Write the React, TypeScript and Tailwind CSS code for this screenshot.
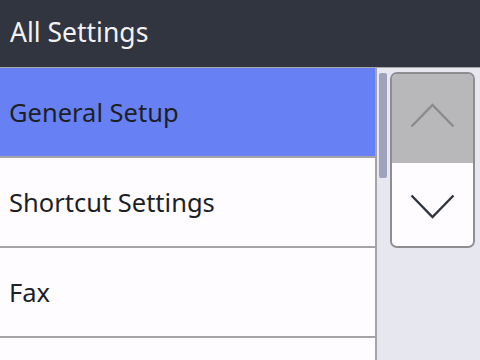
import React from "react";

const ITEMS = ["General Setup", "Shortcut Settings", "Fax", ""];

function Chevron({ up }: { up?: boolean }) {
  return (
    <svg width="45" height="26" viewBox="0 0 45 26" fill="none">
      <path
        d={up ? "M1.5 24.5 L22.5 3 L43.5 24.5" : "M1.5 1.5 L22.5 23 L43.5 1.5"}
        stroke={up ? "#8b8a8d" : "#30343c"}
        strokeWidth="2.4"
      />
    </svg>
  );
}

export default function App() {
  return (
    <div
      className="w-[480px] h-[360px] overflow-hidden flex flex-col bg-[#e6e7ef]"
      style={{ fontFamily: '"Noto Sans", "DejaVu Sans", sans-serif' }}
    >
      <header className="h-[68px] shrink-0 bg-[#31353f] border-b border-[#a7a7ab] flex items-center px-[10px]">
        <span className="text-[26.5px] text-[#f2f2f4] leading-none pb-[2px]">All Settings</span>
      </header>

      <div className="flex flex-1 min-h-0">
        <div className="w-[377px] shrink-0 border-r-2 border-[#a4a4a8] bg-[#fefcff]">
          {ITEMS.map((label, i) => (
            <div
              key={i}
              className={`h-[90px] border-b-2 border-[#a4a4a8] flex items-center px-[9px] text-[25.5px] text-[#1d1f25] ${
                i === 0 ? "bg-[#6781f4]" : ""
              }`}
            >
              {label}
            </div>
          ))}
        </div>

        <div className="flex-1 flex items-start pl-[2px] pt-[5px]">
          <div className="w-[8px] h-[105px] rounded-[2px] bg-[#9fa2bb]" />
          <div className="ml-[3px] mt-[-1px] w-[85px] h-[176px] rounded-[7px] border-2 border-[#8e8e92] overflow-hidden flex flex-col">
            <button className="h-[89px] bg-[#b8b7ba] flex items-center justify-center pb-[8px]">
              <Chevron up />
            </button>
            <button className="flex-1 bg-[#fefcff] flex items-center justify-center pt-[4px]">
              <Chevron />
            </button>
          </div>
        </div>
      </div>
    </div>
  );
}
